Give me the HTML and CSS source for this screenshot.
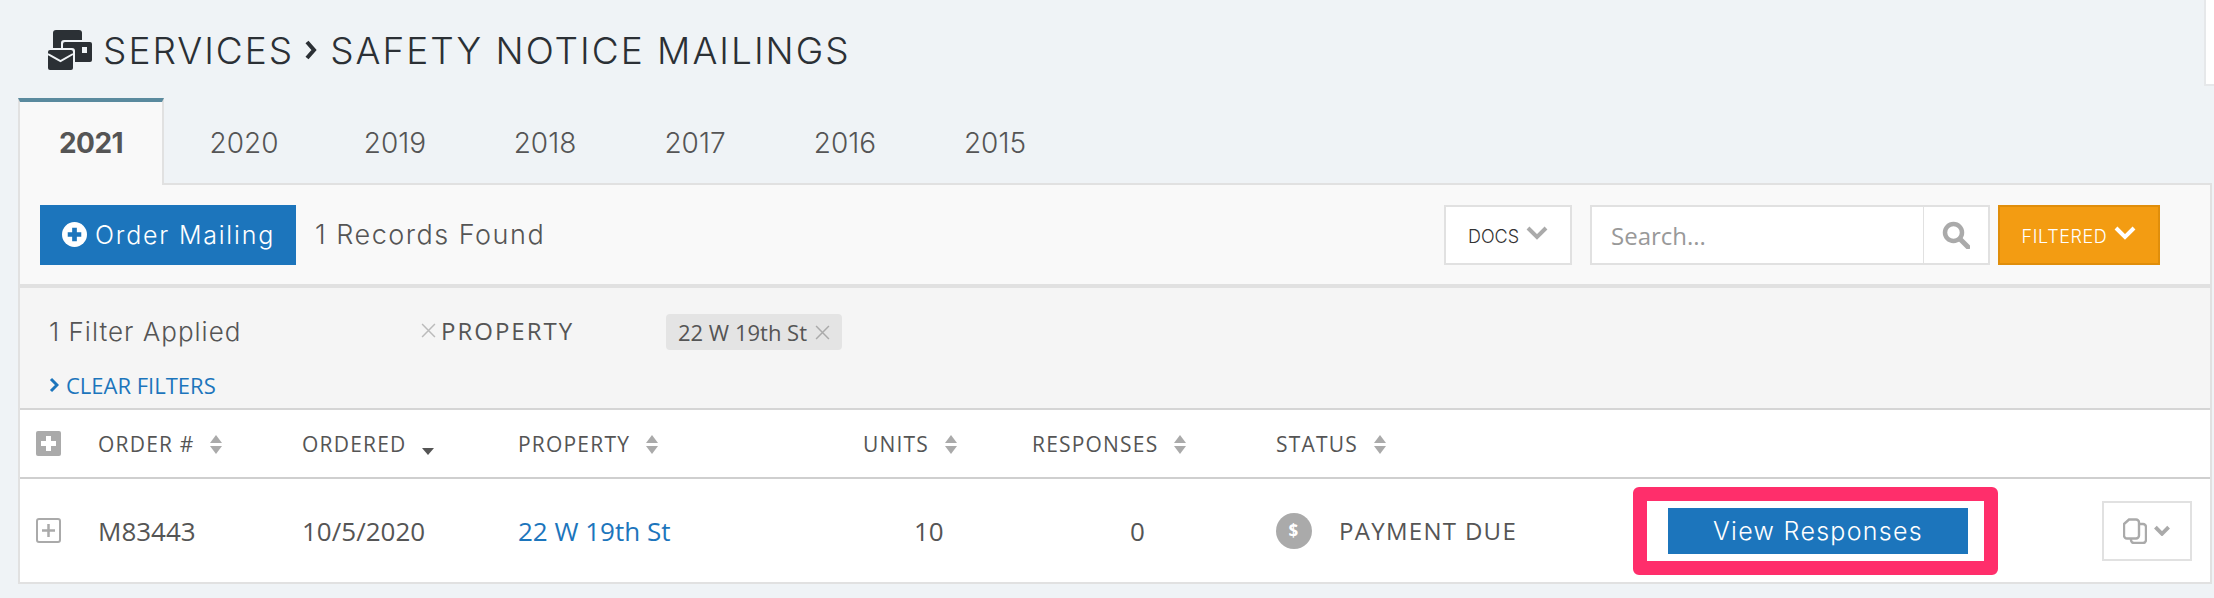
FILE: index.html
```html
<!DOCTYPE html>
<html lang="en">
<head>
    <meta charset="UTF-8">
    <title>Safety Notice Mailings</title>
    <link rel="stylesheet" href="styles.css">
</head>
<body>
    <h1 class="title">
        <svg class="title-icon" viewBox="0 0 44 44">
            <rect x="5" y="2" width="29" height="22" rx="3" fill="#2b3035"/>
            <rect x="13" y="12" width="32" height="23" rx="3" fill="#eff3f6"/>
            <rect x="15" y="14" width="29" height="20" rx="2" fill="#2b3035"/>
            <rect x="34" y="19" width="5" height="6" fill="#eff3f6"/>
            <rect x="-1" y="20" width="28" height="24" rx="3" fill="#eff3f6"/>
            <rect x="0" y="22" width="25" height="20" rx="2" fill="#2b3035"/>
            <polyline points="0,26 12.5,33 25,26" fill="none" stroke="#eff3f6" stroke-width="2"/>
        </svg>
        <span>SERVICES</span>
        <svg class="title-sep" viewBox="0 0 13 20"><polyline points="3,2 10,10 3,18" fill="none" stroke="#2b3035" stroke-width="4"/></svg>
        <span>SAFETY NOTICE MAILINGS</span>
        <span class="corner"></span>
    </h1>
    <ul class="tabs">
        <li class="active">2021</li>
        <li>2020</li>
        <li>2019</li>
        <li>2018</li>
        <li>2017</li>
        <li>2016</li>
        <li>2015</li>
    </ul>
    <div class="panel">
        <div class="toolbar">
            <a class="btn-order">
                <svg class="plus-circle" viewBox="0 0 24 24">
                    <circle cx="12" cy="12" r="12" fill="#fff"/>
                    <path d="M12 5.5v13M5.5 12h13" stroke="#1c75bc" stroke-width="4.5"/>
                </svg>
                Order Mailing
            </a>
            <span class="found">1 Records Found</span>
            <a class="btn-docs">DOCS
                <svg class="chev" viewBox="0 0 22 14"><polyline points="2,2 11,11 20,2" fill="none" stroke="#aaa" stroke-width="4"/></svg>
            </a>
            <div class="search">
                <span class="search-input">Search...</span>
                <span class="search-btn">
                    <svg viewBox="0 0 28 28" width="28" height="28">
                        <circle cx="11.5" cy="11.5" r="8.5" fill="none" stroke="#aaa" stroke-width="4.5"/>
                        <path d="M18 18l8 8" stroke="#aaa" stroke-width="5" stroke-linecap="round"/>
                    </svg>
                </span>
            </div>
            <a class="btn-filtered">FILTERED
                <svg class="chev" viewBox="0 0 22 14"><polyline points="2,2 11,11 20,2" fill="none" stroke="#fff" stroke-width="4"/></svg>
            </a>
        </div>
        <div class="filters">
            <div class="filter-row">
                <span class="filter-count">1 Filter Applied</span>
                <span class="filter-name">
                    <svg class="x" viewBox="0 0 14 14"><path d="M1 1l12 12M13 1L1 13" stroke="#bbb" stroke-width="1.4"/></svg>PROPERTY
                </span>
                <span class="chip">22 W 19th St
                    <svg class="x" viewBox="0 0 14 14"><path d="M1 1l12 12M13 1L1 13" stroke="#aaa" stroke-width="1.4"/></svg>
                </span>
            </div>
            <a class="clear">
                <svg viewBox="0 0 10 16" width="10" height="16"><polyline points="2,2 8,8 2,14" fill="none" stroke="#1c75bc" stroke-width="3"/></svg>
                CLEAR FILTERS
            </a>
        </div>
        <table>
            <colgroup>
                <col class="c-toggle"><col class="c-order"><col class="c-date"><col class="c-prop">
                <col class="c-units"><col class="c-resp"><col class="c-status"><col class="c-view"><col>
            </colgroup>
            <thead>
                <tr>
                    <th class="toggle">
                        <svg viewBox="0 0 25 25" width="25" height="25">
                            <rect width="25" height="25" rx="2" fill="#aaa"/>
                            <path d="M12.5 5v15M5 12.5h15" stroke="#fff" stroke-width="5"/>
                        </svg>
                    </th>
                    <th>ORDER # <b class="sort"></b></th>
                    <th>ORDERED <b class="sort-down"></b></th>
                    <th>PROPERTY <b class="sort"></b></th>
                    <th>UNITS <b class="sort"></b></th>
                    <th>RESPONSES <b class="sort"></b></th>
                    <th>STATUS <b class="sort"></b></th>
                    <th></th>
                    <th></th>
                </tr>
            </thead>
            <tbody>
                <tr>
                    <td class="toggle">
                        <svg viewBox="0 0 25 25" width="25" height="25">
                            <rect x="1" y="1" width="23" height="23" rx="2" fill="#fff" stroke="#aaa" stroke-width="2"/>
                            <path d="M12.5 6v13M6 12.5h13" stroke="#aaa" stroke-width="2.5"/>
                        </svg>
                    </td>
                    <td>M83443</td>
                    <td>10/5/2020</td>
                    <td><a class="link">22 W 19th St</a></td>
                    <td class="units">10</td>
                    <td class="resp">0</td>
                    <td>
                        <div class="status">
                            <span class="dollar">$</span>
                            PAYMENT DUE
                        </div>
                    </td>
                    <td>
                        <div class="highlight"><a class="btn-view">View Responses</a></div>
                    </td>
                    <td>
                        <a class="btn-copy">
                            <svg viewBox="0 0 24 26" width="24" height="26">
                                <rect x="8" y="6" width="15" height="19" rx="3" fill="#fff" stroke="#aaa" stroke-width="2.4"/>
                                <path d="M6 1.5h7a3 3 0 0 1 3 3v13a3 3 0 0 1-3 3H4a3 3 0 0 1-3-3V6z" fill="#fff" stroke="#aaa" stroke-width="2.4"/>
                            </svg>
                            <svg class="chev-small" viewBox="0 0 16 10"><polyline points="2,2 8,8 14,2" fill="none" stroke="#aaa" stroke-width="3.5"/></svg>
                        </a>
                    </td>
                </tr>
            </tbody>
        </table>
    </div>
</body>
</html>
```

FILE: styles.css
```css
* {
    margin: 0;
    padding: 0;
    box-sizing: border-box;
}
body {
    background: #eff3f6;
    font-family: "Open Sans", "Liberation Sans", sans-serif;
    color: #555;
    overflow: hidden;
}
.title {
    display: flex;
    align-items: center;
    height: 98px;
    padding: 2px 0 0 48px;
    font-family: Inter, "Open Sans", sans-serif;
    font-size: 37px;
    font-weight: 300;
    letter-spacing: 2px;
    color: #2b3035;
}
.title-icon {
    width: 44px;
    height: 44px;
    margin-right: 11px;
}
.title-sep {
    width: 13px;
    height: 20px;
    margin: 0 13px 0 10px;
}
.corner {
    align-self: flex-start;
    width: 10px;
    height: 86px;
    margin: -2px 0 0 auto;
    background: #fff;
    border-left: 2px solid #e6e8ea;
    border-bottom: 2px solid #e6e8ea;
}
.tabs {
    display: flex;
    list-style: none;
    margin-left: 18px;
    position: relative;
    z-index: 1;
    height: 87px;
    font-family: Inter, "Open Sans", sans-serif;
    font-size: 28px;
    font-weight: 300;
}
.tabs li {
    width: 150px;
    padding-top: 28px;
    text-align: center;
}
.tabs li:nth-child(2) {
    width: 152px;
}
.tabs li.active {
    width: 146px;
    margin-right: 4px;
    border-top: 4px solid #5a8a9e;
    border-left: 2px solid #e1e1e1;
    border-right: 2px solid #e1e1e1;
    background: #f9f9f9;
    font-weight: 700;
    letter-spacing: -0.5px;
    padding-top: 24px;
}
.panel {
    margin: -2px 0 0 18px;
    width: 2194px;
    border: 2px solid #e1e1e1;
}
.toolbar {
    display: flex;
    align-items: center;
    height: 103px;
    padding: 0 0 0 20px;
    background: #f9f9f9;
    border-bottom: 4px solid #e1e1e1;
}
.btn-order {
    display: flex;
    align-items: center;
    width: 256px;
    height: 60px;
    padding-left: 22px;
    background: #1c75bc;
    color: #fff;
    font-family: Inter, "Open Sans", sans-serif;
    font-size: 25px;
    font-weight: 300;
    letter-spacing: 1.8px;
}
.plus-circle {
    width: 25px;
    height: 25px;
    margin-right: 8px;
}
.found {
    margin-left: 19px;
    width: 1129px;
    font-family: Inter, "Open Sans", sans-serif;
    font-size: 27px;
    font-weight: 300;
    letter-spacing: 1.5px;
}
.btn-docs {
    display: flex;
    align-items: center;
    justify-content: center;
    width: 128px;
    height: 60px;
    margin-right: 18px;
    padding-top: 4px;
    border: 2px solid #e1e1e1;
    background: #fff;
    font-family: Inter, "Open Sans", sans-serif;
    font-size: 18px;
    font-weight: 300;
    color: #333;
}
.chev {
    width: 22px;
    height: 14px;
    margin: -8px 0 0 7px;
}
.search {
    display: flex;
    width: 400px;
    height: 60px;
    margin-right: 8px;
    border: 2px solid #e1e1e1;
    background: #fff;
}
.search-input {
    flex: 1;
    padding-left: 19px;
    line-height: 58px;
    font-size: 24px;
    color: #999;
}
.search-btn {
    display: flex;
    align-items: center;
    justify-content: center;
    width: 65px;
    border-left: 1px solid #e1e1e1;
}
.btn-filtered {
    display: flex;
    align-items: center;
    justify-content: center;
    width: 162px;
    height: 60px;
    padding-top: 4px;
    border: 2px solid #e08e0b;
    background: #f39c12;
    color: #fff;
    font-family: Inter, "Open Sans", sans-serif;
    font-size: 18px;
    font-weight: 300;
    letter-spacing: 0.6px;
}
.filters {
    height: 122px;
    padding: 26px 0 0 29px;
    background: #f5f5f5;
    border-bottom: 2px solid #d5d5d5;
}
.filter-row {
    display: flex;
    align-items: center;
    height: 36px;
}
.filter-count {
    width: 372px;
    margin-top: -2px;
    font-family: Inter, "Open Sans", sans-serif;
    font-size: 26px;
    font-weight: 300;
    letter-spacing: 1px;
}
.filter-name {
    display: flex;
    align-items: center;
    width: 245px;
    margin-top: -3px;
    font-size: 24px;
    letter-spacing: 2px;
}
.filter-name .x {
    margin-right: 5px;
}
.x {
    width: 15px;
    height: 15px;
}
.chip {
    display: flex;
    align-items: center;
    gap: 8px;
    height: 36px;
    padding: 0 12px;
    background: #e4e4e4;
    border-radius: 4px;
    font-size: 22px;
}
.clear {
    display: flex;
    align-items: center;
    gap: 7px;
    margin-top: 20px;
    color: #1c75bc;
    font-size: 22px;
}
table {
    width: 100%;
    table-layout: fixed;
    border-collapse: collapse;
    background: #fff;
}
.c-toggle { width: 78px; }
.c-order { width: 204px; }
.c-date { width: 216px; }
.c-prop { width: 345px; }
.c-units { width: 169px; }
.c-resp { width: 244px; }
.c-status { width: 357px; }
.c-view { width: 469px; }
th {
    height: 68px;
    text-align: left;
    font-size: 21px;
    font-weight: 400;
    letter-spacing: 1.2px;
    border-bottom: 2px solid #cfcfcf;
}
td {
    height: 104px;
    font-size: 26px;
}
.toggle {
    padding-left: 16px;
}
.toggle svg {
    display: block;
}
.sort {
    display: inline-block;
    position: relative;
    width: 13px;
    height: 19px;
    margin-left: 9px;
    vertical-align: -2px;
}
.sort:before,
.sort:after {
    content: '';
    position: absolute;
    left: 0;
    border-left: 6.5px solid transparent;
    border-right: 6.5px solid transparent;
}
.sort:before {
    top: 0;
    border-bottom: 8px solid #aaa;
}
.sort:after {
    bottom: 0;
    border-top: 8px solid #aaa;
}
.sort-down {
    display: inline-block;
    margin-left: 9px;
    vertical-align: -3px;
    border-left: 6.5px solid transparent;
    border-right: 6.5px solid transparent;
    border-top: 7px solid #555;
}
.link {
    color: #1c75bc;
}
.units {
    padding-left: 51px;
}
.resp {
    padding-left: 98px;
}
.status {
    display: flex;
    align-items: center;
    gap: 27px;
    font-size: 24px;
    letter-spacing: 1.3px;
}
.dollar {
    display: flex;
    align-items: center;
    justify-content: center;
    width: 36px;
    height: 36px;
    border-radius: 50%;
    background: #aaa;
    color: #fff;
    font-size: 17px;
    font-weight: 700;
}
.highlight {
    display: flex;
    align-items: center;
    width: 365px;
    height: 88px;
    padding-left: 21px;
    border: 14px solid #ff2e6b;
    border-radius: 6px;
}
.btn-view {
    flex: none;
    width: 300px;
    height: 46px;
    background: #1c75bc;
    color: #fff;
    text-align: center;
    line-height: 46px;
    font-family: Inter, "Open Sans", sans-serif;
    font-size: 25px;
    font-weight: 300;
    letter-spacing: 1.3px;
}
.btn-copy {
    display: flex;
    align-items: center;
    justify-content: center;
    gap: 6px;
    width: 90px;
    height: 60px;
    border: 2px solid #e1e1e1;
}
.chev-small {
    width: 18px;
    height: 11px;
}
```
